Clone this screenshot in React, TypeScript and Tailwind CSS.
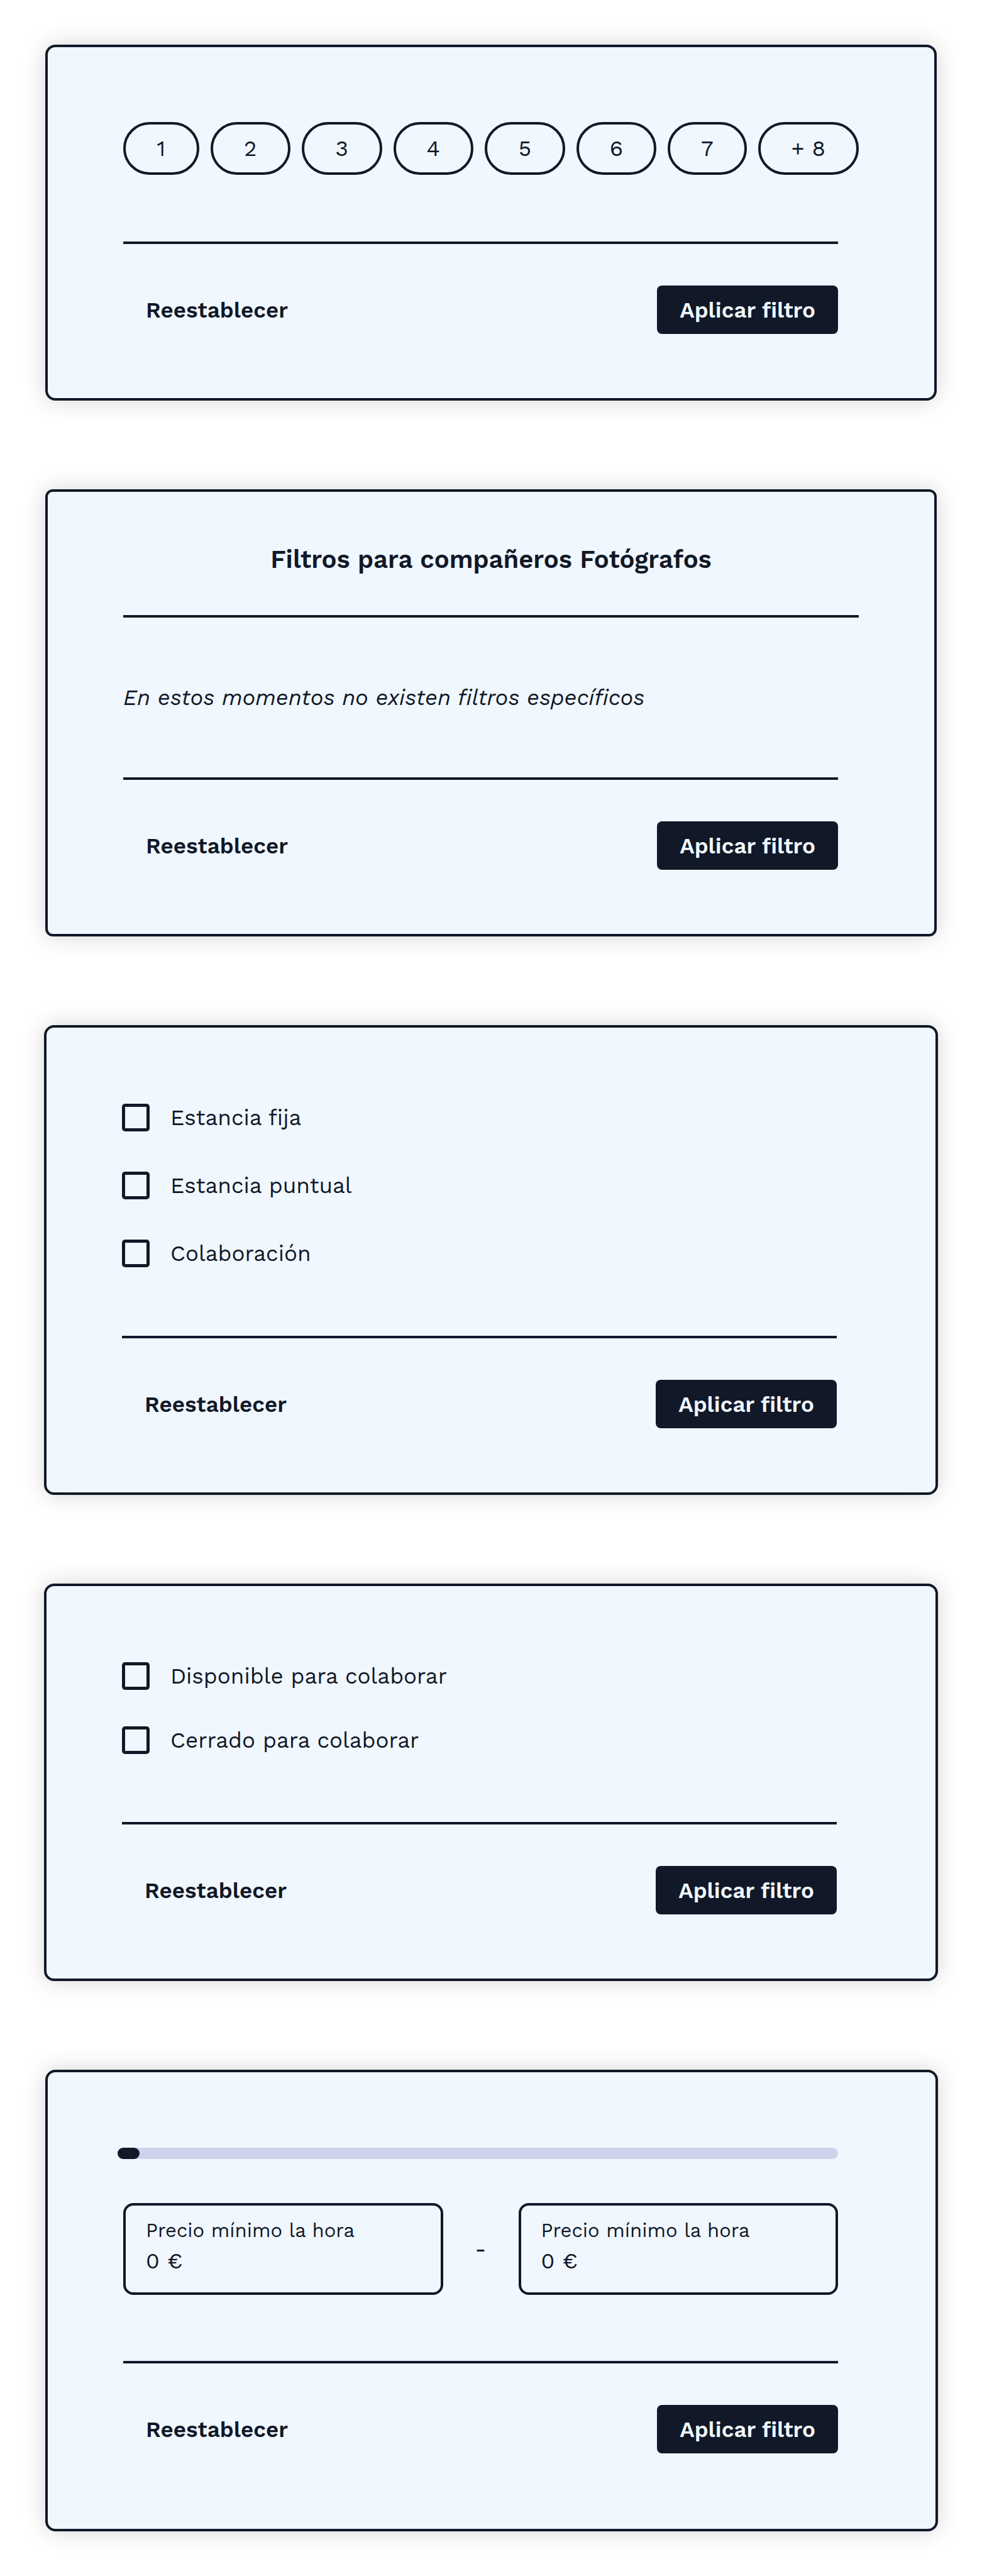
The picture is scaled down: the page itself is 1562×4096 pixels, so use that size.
import { useState, type ReactNode } from "react";

type CardProps = {
  label: string;
  className: string;
  footerClassName: string;
  children: ReactNode;
};

function Card({ label, className, footerClassName, children }: CardProps) {
  return (
    <form
      aria-label={label}
      onSubmit={(e) => e.preventDefault()}
      className={`flex flex-col border-4 border-[#111827] bg-[#f0f7ff] px-[120px] shadow-[0_0_36px_rgba(0,0,0,0.17)] ${className}`}
    >
      {children}
      <footer
        className={`flex items-center justify-between border-t-4 border-[#111827] pt-[66px] ${footerClassName}`}
      >
        <button type="reset" className="h-[77px] px-9 text-[35px] leading-[42px] font-semibold">
          Reestablecer
        </button>
        <button
          type="submit"
          className="h-[77px] rounded-lg bg-[#111827] px-9 text-[35px] leading-[42px] font-semibold text-[#f0f7ff]"
        >
          Aplicar filtro
        </button>
      </footer>
    </form>
  );
}

function CheckRow({ id, label }: { id: string; label: string }) {
  return (
    <div className="flex h-[44px] items-center">
      <input
        id={id}
        type="checkbox"
        className="size-[44px] shrink-0 appearance-none rounded-[5px] border-[5px] border-[#111827] checked:bg-[#111827]"
      />
      <label htmlFor={id} className="pl-[33px] text-[35px] leading-[42px]">
        {label}
      </label>
    </div>
  );
}

function PriceField({ id }: { id: string }) {
  return (
    <div className="flex h-[146px] min-w-0 flex-1 flex-col rounded-2xl border-4 border-[#111827] px-8 pt-4">
      <label htmlFor={id} className="text-[31px] leading-[48px]">
        Precio mínimo la hora
      </label>
      <input
        id={id}
        type="text"
        defaultValue="0 €"
        className="w-full bg-transparent text-[35px] leading-[48px] outline-none"
      />
    </div>
  );
}

const chip = "h-[84px] rounded-full border-4 border-[#111827] text-[35px] leading-[42px]";

export default function App() {
  const [price, setPrice] = useState(0);
  return (
    <main className="flex min-h-screen w-full flex-col gap-[141px] bg-white pt-[71px] pb-[70px] font-['Work_Sans',Inter,sans-serif] text-[#111827]">
      <Card label="Cantidad" className="mx-[72px] rounded-2xl pt-[119px] pb-[102px]" footerClassName="mr-[33px]">
        <div className="mb-[106px] grid grid-cols-[121fr_128fr_128fr_128fr_128fr_128fr_126fr_161fr] gap-[18px]">
          {["1", "2", "3", "4", "5", "6", "7", "+ 8"].map((n) => (
            <button key={n} type="button" className={chip}>
              {n}
            </button>
          ))}
        </div>
      </Card>

      <Card label="Fotógrafos" className="mx-[72px] rounded-xl pt-[84px] pb-[102px]" footerClassName="mr-[33px]">
        <h2 className="border-b-4 border-[#111827] pb-16 text-center text-[40px] leading-[48px] font-semibold">
          Filtros para compañeros Fotógrafos
        </h2>
        <p className="flex h-[254px] items-center text-[35px] leading-[42px] italic">
          En estos momentos no existen filtros específicos
        </p>
      </Card>

      <Card label="Tipo de estancia" className="mx-[70px] rounded-2xl pt-[121px] pb-[102px]" footerClassName="mr-[37px]">
        <div className="mb-[109px] flex flex-col gap-16">
          <CheckRow id="fija" label="Estancia fija" />
          <CheckRow id="puntual" label="Estancia puntual" />
          <CheckRow id="colaboracion" label="Colaboración" />
        </div>
      </Card>

      <Card label="Disponibilidad" className="mx-[70px] rounded-2xl pt-[121px] pb-[102px]" footerClassName="mr-[37px]">
        <div className="mb-[108px] flex flex-col gap-[58px]">
          <CheckRow id="disponible" label="Disponible para colaborar" />
          <CheckRow id="cerrado" label="Cerrado para colaborar" />
        </div>
      </Card>

      <Card label="Precio" className="mr-[70px] ml-[72px] rounded-2xl py-[120px]" footerClassName="mr-[35px]">
        <div className="mr-[35px] mb-[105px] flex flex-col gap-[70px]">
          <input
            type="range"
            aria-label="Precio por hora"
            min={0}
            max={100}
            value={price}
            onChange={(e) => setPrice(Number(e.target.value))}
            className="-ml-[9px] h-[18px] appearance-none rounded-full bg-[#ced3ec] [&::-webkit-slider-thumb]:h-[18px] [&::-webkit-slider-thumb]:w-[35px] [&::-webkit-slider-thumb]:appearance-none [&::-webkit-slider-thumb]:rounded-full [&::-webkit-slider-thumb]:bg-[#111827]"
          />
          <div className="flex items-center">
            <PriceField id="precio-desde" />
            <span className="w-[120px] text-center text-[35px] leading-[42px]">-</span>
            <PriceField id="precio-hasta" />
          </div>
        </div>
      </Card>
    </main>
  );
}
